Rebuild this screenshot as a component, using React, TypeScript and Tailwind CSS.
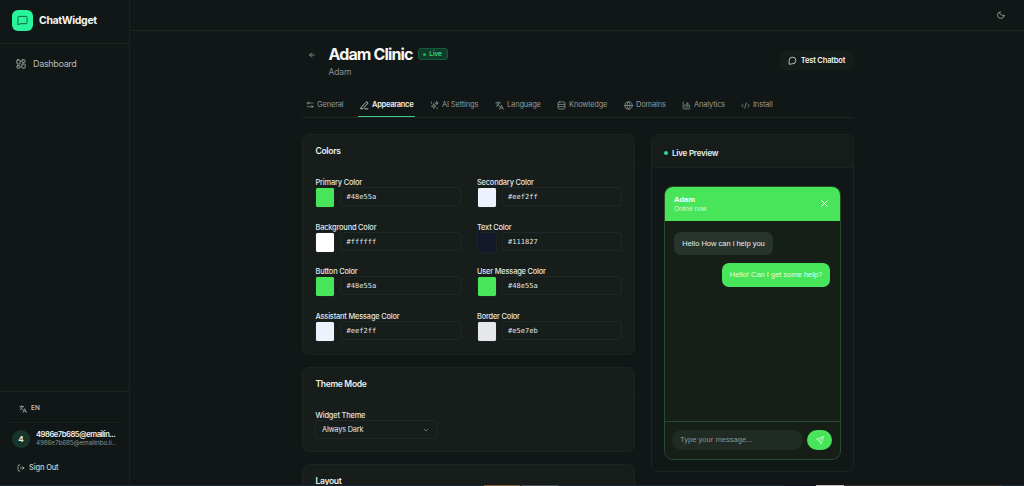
import type { ReactNode } from "react";
import { ArrowLeft, ChevronDown, MessageSquare, X } from "lucide-react";

type IconProps = { className?: string; children: ReactNode };

const Icon = ({ className = "size-[9px]", children }: IconProps) => (
  <svg
    viewBox="0 0 24 24"
    fill="none"
    stroke="currentColor"
    strokeWidth={2}
    strokeLinecap="round"
    strokeLinejoin="round"
    className={`shrink-0 ${className}`}
  >
    {children}
  </svg>
);

const TranslateIcon = ({ className }: { className?: string }) => (
  <Icon className={className}>
    <path d="M2 5h12M8 2v3M11.500 5c-1 4-4 7.500-8.500 9.500M5 8c1.500 3 4 5 7 6" />
    <path d="M12 22l5-11 5 11M13.800 18.500h6.400" />
  </Icon>
);

const tabs = [
  {
    label: "General",
    width: "w-[42px]",
    icon: (
      <Icon className="size-[8px]">
        <path d="M10 6h11M3 17h11" />
        <circle cx="6" cy="6" r="3" />
        <circle cx="18" cy="17" r="3" />
      </Icon>
    ),
  },
  {
    label: "Appearance",
    width: "w-[57px]",
    icon: (
      <Icon className="size-[9px]">
        <path d="M4 16L16 3.500a2.500 2.500 0 0 1 4 4L8 20l-5 1zM13 21h8" />
      </Icon>
    ),
    active: true,
  },
  {
    label: "AI Settings",
    width: "w-[52px]",
    icon: (
      <Icon className="size-[9px]">
        <path d="M10 8l1.500 4.500L16 14l-4.500 1.500L10 20l-1.500-4.500L4 14l4.500-1.500zM18 2l1 3 3 1-3 1-1 3-1-3-3-1 3-1zM4 3v3M19 18v3" />
      </Icon>
    ),
  },
  { label: "Language", width: "w-[49px]", icon: <TranslateIcon className="size-[9px]" /> },
  {
    label: "Knowledge",
    width: "w-[54px]",
    icon: (
      <Icon className="size-[9px]">
        <rect x="3" y="2.500" width="18" height="19" rx="3" />
        <path d="M3 9h18M3 15h18" />
      </Icon>
    ),
  },
  {
    label: "Domains",
    width: "w-[45px]",
    icon: (
      <Icon className="size-[9px]">
        <circle cx="12" cy="12" r="10" />
        <path d="M2 12h20M12 2c5 5 5 15 0 20M12 2c-5 5-5 15 0 20" />
      </Icon>
    ),
  },
  {
    label: "Analytics",
    width: "w-[46px]",
    icon: (
      <Icon className="size-[9px]">
        <path d="M3 3v16a2 2 0 0 0 2 2h16M8 16V9M13 16V5h3v11M20 16v-5" />
      </Icon>
    ),
  },
  {
    label: "Install",
    width: "w-[36px]",
    icon: (
      <Icon className="size-[9px]">
        <path d="M6 8l-4 4 4 4M18 8l4 4-4 4M14 5l-4 14" />
      </Icon>
    ),
  },
];

const colors = [
  { label: "Primary Color", value: "#48e55a", swatch: "bg-[#48e55a]" },
  { label: "Secondary Color", value: "#eef2ff", swatch: "bg-[#eef2ff]" },
  { label: "Background Color", value: "#ffffff", swatch: "bg-white" },
  { label: "Text Color", value: "#111827", swatch: "bg-[#15182a]" },
  { label: "Button Color", value: "#48e55a", swatch: "bg-[#48e55a]" },
  { label: "User Message Color", value: "#48e55a", swatch: "bg-[#48e55a]" },
  { label: "Assistant Message Color", value: "#eef2ff", swatch: "bg-[#eef2ff]" },
  { label: "Border Color", value: "#e5e7eb", swatch: "bg-[#e5e7eb]" },
];

const Sidebar = () => (
  <aside className="flex w-[130px] shrink-0 flex-col border-r border-[#1b2321]">
    <div className="flex h-11 items-center gap-1.5 border-b border-[#1b2321] pl-3 pb-0.5">
      <div className="flex size-[21px] items-center justify-center rounded-[6px] bg-[#27f49b]">
        <MessageSquare className="size-[11px] text-[#0d5a3c]" strokeWidth={2} />
      </div>
      <span className="text-[10.500px] font-bold tracking-[-0.35px] text-[#f1f5f3]">ChatWidget</span>
    </div>
    <nav className="flex items-center gap-[7px] pt-[13px] pl-4 text-[9px] leading-[14px] tracking-[-0.33px] text-[#b4bcb9]">
      <Icon className="size-[10px]">
        <rect x="2" y="2" width="8" height="10" rx="2" />
        <rect x="14" y="2" width="8" height="6" rx="2" />
        <rect x="14" y="12" width="8" height="10" rx="2" />
        <rect x="2" y="16" width="8" height="6" rx="2" />
      </Icon>
      Dashboard
    </nav>

    <div className="mt-auto h-[95px] border-t border-[#1b2321]">
      <div className="flex h-[30px] items-center gap-1 pt-1 pl-[19px] text-[6.500px] font-semibold text-[#b4bcb9]">
        <TranslateIcon className="size-[8px]" />
        EN
      </div>
      <div className="mr-1.5 ml-2 flex h-8 items-center gap-[6px] border-t border-[#19211f] pl-1">
        <div className="flex size-[18px] shrink-0 items-center justify-center rounded-full bg-[#18352b] text-[8px] font-bold text-[#e6ebe9]">
          4
        </div>
        <div className="min-w-0">
          <p className="text-[7.600px] leading-[9px] font-semibold tracking-[-0.46px] whitespace-nowrap text-[#eef2f0]">
            4986e7b685@emailin...
          </p>
          <p className="text-[6.400px] leading-[9px] tracking-[-0.16px] whitespace-nowrap text-[#84908b]">
            4986e7b685@emailinbo.li...
          </p>
        </div>
      </div>
      <div className="flex h-[28px] items-center gap-[4px] pl-[17px] text-[7.500px] font-medium tracking-[-0.15px] text-[#cbd2cf]">
        <Icon className="size-[8px]">
          <path d="M9 3H6a3 3 0 0 0-3 3v12a3 3 0 0 0 3 3h3M10 12h11M17 8l4 4-4 4" />
        </Icon>
        Sign Out
      </div>
    </div>
  </aside>
);

const PageHeader = () => (
  <div className="flex h-[50px] pt-[12px]">
    <ArrowLeft className="mt-[8px] ml-[6px] size-[8px] text-[#aab4b0]" />
    <div className="ml-[12.500px]">
      <div className="flex items-center gap-[5px]">
        <h1 className="text-[16px] leading-[22px] font-bold tracking-[-0.86px] text-[#f4f7f5]">Adam Clinic</h1>
        <span className="flex h-3 w-[30px] items-center justify-center gap-[3px] rounded-[3px] border border-[#155b3b] bg-[#123c2a] text-[6.500px] leading-[10px] font-semibold tracking-[-0.1px] text-[#30dd89]">
          <span className="size-[3px] rounded-full bg-[#1fae6b]" />
          Live
        </span>
      </div>
      <p className="mt-px text-[8.500px] leading-[12px] tracking-[-0.1px] text-[#85918c]">Adam</p>
    </div>
    <button className="mt-[8px] ml-auto flex h-[19px] w-[74px] items-center justify-center gap-[4px] rounded-[5px] bg-[#161c1a] pr-px text-[7.600px] font-semibold tracking-[-0.22px] text-[#eef2f0]">
      <Icon className="size-[9px]">
        <path d="M3 21V12a9 9 0 1 1 9 9z" />
      </Icon>
      Test Chatbot
    </button>
  </div>
);

const Tabs = () => (
  <div className="mt-[12px] flex h-[25px] gap-[13px] border-b border-[#1e2623] pl-px">
    {tabs.map((tab) => (
      <div
        key={tab.label}
        className={`flex h-6 items-center gap-[3px] border-b pt-px pl-[2px] text-[7.500px] whitespace-nowrap ${tab.width} ${
          tab.active
            ? "border-[#42c883] font-semibold tracking-[-0.29px] text-[#eef2f0]"
            : "border-transparent tracking-[-0.16px] text-[#909b97]"
        }`}
      >
        <span className="flex w-[9px] justify-center">{tab.icon}</span>
        {tab.label}
      </div>
    ))}
  </div>
);

const Card = ({ title, height, children }: { title: string; height: string; children?: ReactNode }) => (
  <section className={`shrink-0 rounded-[7px] border border-[#1c2422] bg-[#171d1b] ${height}`}>
    <h2 className="flex h-[29px] items-center border-b border-[#1a211f] pt-[4px] pl-[12.500px] text-[8.500px] font-semibold tracking-[-0.3px] text-[#edf1ef]">
      {title}
    </h2>
    {children}
  </section>
);

const ColorField = ({ label, value, swatch }: { label: string; value: string; swatch: string }) => (
  <div className="h-[44.600px]">
    <p className="pt-px pl-[0.500px] text-[7.400px] leading-[10px] font-medium tracking-[-0.17px] text-[#e2e7e5]">
      {label}
    </p>
    <div className="-mt-px flex gap-[5px]">
      <div className={`h-[21px] w-5 rounded-[2px] border border-[#1c2422] bg-clip-padding ${swatch}`} />
      <div className="flex h-[19px] flex-1 items-center rounded-[3px] border border-[#202826] pt-[2px] pl-[5.500px] font-['DejaVu_Sans_Mono',monospace] text-[7px] tracking-[0.05px] text-[#e2e7e5]">
        {value}
      </div>
    </div>
  </div>
);

const LivePreview = () => (
  <section className="h-[338px] w-[203px] rounded-[7px] border border-[#1b2321]">
    <div className="flex h-[33px] items-center gap-1 rounded-t-[6px] border-b border-[#1c2422] bg-[#161c1a] pt-1 pl-3 text-[8px] font-semibold tracking-[-0.2px] text-[#edf1ef]">
      <span className="size-1 rounded-full bg-[#22e08c]" />
      Live Preview
    </div>
    <div className="mt-[18px] ml-3 flex h-[274px] w-[177px] flex-col overflow-hidden rounded-[9px] border border-[#2a4a30] bg-[#151f17] font-['Liberation_Sans',Arial,sans-serif]">
      <div className="-mx-px -mt-px flex h-[35px] shrink-0 items-center bg-[#48e55a] pr-[11px] pl-2.5 text-white">
        <div>
          <p className="text-[7.500px] leading-[9px] font-bold">Adam</p>
          <p className="text-[6.500px] leading-[9px] text-[#d5f9da]">Online now</p>
        </div>
        <X className="ml-auto size-[11px]" strokeWidth={2} />
      </div>
      <div className="flex flex-1 flex-col px-2.5 pt-[11px] text-[7.500px]">
        <div className="-ml-px flex h-[23px] w-[99px] items-center justify-center rounded-[7px] bg-[#27342c] whitespace-nowrap text-[#e8eeea]">
          Hello How can i help you
        </div>
        <div className="mt-2 flex h-6 w-[108px] items-center justify-center self-end rounded-[7px] bg-[#48e55a] whitespace-nowrap text-[#e5ffe9]">
          Hello! Can I get some help?
        </div>
      </div>
      <div className="flex h-[38px] shrink-0 items-center gap-1 border-t border-[#2a4a30] pr-2 pb-px pl-[7px]">
        <div className="flex h-5 w-[132px] items-center rounded-full bg-[#202b23] pl-2 text-[7.600px] text-[#8b958e]">
          Type your message...
        </div>
        <div className="flex h-5 w-[25px] items-center justify-center rounded-full bg-[#48e55a] text-white">
          <Icon className="size-[8px]">
            <path d="M22 2L2 9.500l8 4.500 4.500 8zM10 14l5-5" />
          </Icon>
        </div>
      </div>
    </div>
  </section>
);

export default function App() {
  return (
    <div className="relative flex h-[486px] w-[1024px] overflow-hidden bg-[#111716] font-['Inter',sans-serif]">
      <Sidebar />
      <main className="min-w-0 flex-1">
        <div className="flex h-[31px] items-center justify-end border-b border-[#1e2624] pr-[19px] text-[#c3cbc8]">
          <Icon className="size-[8px]">
            <path d="M21.500 14A10 10 0 1 1 10 2.500 6 6 0 0 0 14 12c3 2 5.500 0 7.500 2z" />
          </Icon>
        </div>
        <div className="ml-[172px] w-[552px]">
          <PageHeader />
          <Tabs />
          <div className="mt-4 flex gap-4">
            <div className="flex w-[333px] flex-col gap-3">
              <Card title="Colors" height="h-[221px]">
                <div className="grid grid-cols-2 gap-x-4 px-3 pt-[13px]">
                  {colors.map((color) => (
                    <ColorField key={color.label} {...color} />
                  ))}
                </div>
              </Card>
              <Card title="Theme Mode" height="h-[85px]">
                <div className="px-3 pt-[13px]">
                  <p className="pt-px pl-[0.500px] text-[7.400px] leading-[10px] font-medium tracking-[-0.17px] text-[#e2e7e5]">
                    Widget Theme
                  </p>
                  <div className="-mt-px flex h-[19px] w-[122px] items-center justify-between rounded-[3px] border border-[#202826] px-1.5 pt-px text-[7.400px] tracking-[-0.2px] text-[#e2e7e5]">
                    Always Dark
                    <ChevronDown className="size-[8px] text-[#8b9692]" />
                  </div>
                </div>
              </Card>
              <Card title="Layout" height="h-[85px]" />
            </div>
            <LivePreview />
          </div>
        </div>
      </main>

      {/* edge of the desktop taskbar */}
      <div className="absolute inset-x-0 bottom-0 flex h-px bg-[#1c2631]">
        <div className="ml-[484px] w-9 bg-[#80603a]" />
        <div className="ml-0.5 w-9 bg-[#4b4e54]" />
        <div className="ml-[226px] w-8 bg-[#11122a]" />
        <div className="w-7 bg-[#c9c2c4]" />
        <div className="w-[158px] bg-[#393535]" />
      </div>
    </div>
  );
}
